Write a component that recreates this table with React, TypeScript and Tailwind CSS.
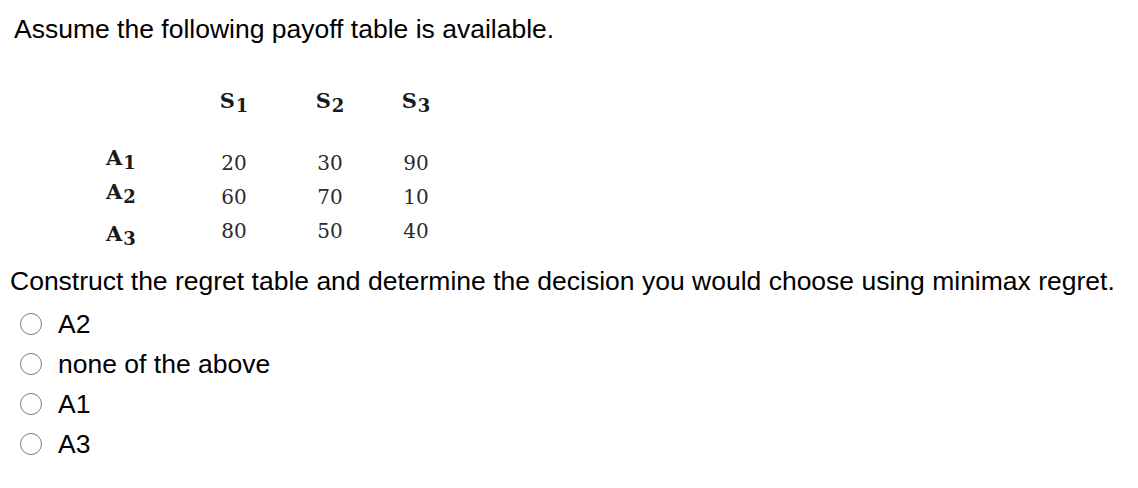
export default function App() {
  const sans = "font-['Liberation_Sans',Arial,sans-serif]";
  const serif = "font-['DejaVu_Serif','Liberation_Serif',serif]";

  const rows = [
    { label: "1", values: ["20", "30", "90"], shift: "-translate-y-[5px]" },
    { label: "2", values: ["60", "70", "10"], shift: "-translate-y-[5px]" },
    { label: "3", values: ["80", "50", "40"], shift: "translate-y-[3px]" },
  ];

  const options = ["A2", "none of the above", "A1", "A3"];

  return (
    <main className={`w-[1138px] h-[488px] bg-white text-black ${sans}`}>
      <p className="pl-[14px] pt-[14px] text-[26.5px] leading-[30px]">
        Assume the following payoff table is available.
      </p>

      {/* payoff table */}
      <div className={`ml-[106px] mt-[41px] ${serif}`}>
        <div className="flex h-[32px] items-center">
          <div className="w-[80px]" />
          {["1", "2", "3"].map((n, i) => (
            <div
              key={n}
              className={`${i === 2 ? "w-[76px]" : "w-[96px]"} text-center text-[21px] font-bold text-[#1a1a1a]`}
            >
              S<sub className="ml-[1px] text-[18px] relative top-[4px] align-baseline">{n}</sub>
            </div>
          ))}
        </div>
        <div className="mt-[29px] flex flex-col">
          {rows.map((r) => (
            <div key={r.label} className="flex h-[34px] items-center">
              <div className={`w-[80px] text-[21px] font-bold text-[#1a1a1a] ${r.shift}`}>
                A<sub className="ml-[1px] text-[18px] relative top-[4px] align-baseline">{r.label}</sub>
              </div>
              {r.values.map((v, i) => (
                <div
                  key={i}
                  className={`${i === 2 ? "w-[76px]" : "w-[96px]"} text-center text-[20px] text-[#2a2a2a]`}
                >
                  {v}
                </div>
              ))}
            </div>
          ))}
        </div>
      </div>

      <p className="pl-[10px] mt-[18px] text-[26.5px] leading-[30px]">
        Construct the regret table and determine the decision you would choose using minimax regret.
      </p>

      <ul className="mt-[8px] flex flex-col">
        {options.map((o) => (
          <li key={o} className="flex h-[40px] items-center">
            <span className="ml-[20px] h-[22px] w-[22px] rounded-full border-[1.5px] border-[#7a7a7a] bg-white" />
            <span className="ml-[16px] text-[26.5px] leading-[30px]">{o}</span>
          </li>
        ))}
      </ul>
    </main>
  );
}
